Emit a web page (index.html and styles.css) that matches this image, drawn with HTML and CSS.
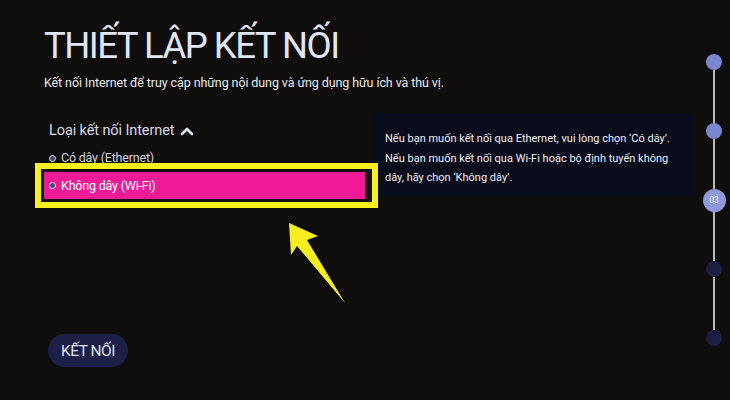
FILE: index.html
```html
<!DOCTYPE html>
<html lang="vi">
<head>
  <meta charset="UTF-8" />
  <meta name="viewport" content="width=device-width, initial-scale=1" />
  <title>Thiết lập kết nối</title>
  <link rel="stylesheet" href="styles.css">
</head>
<body>
  <div class="screen">
    <main class="setup">
      <h1 class="title">THIẾT LẬP KẾT NỐI</h1>
      <p class="lead">Kết nối Internet để truy cập những nội dung và ứng dụng hữu ích và thú vị.</p>

      <div class="row">
        <section class="picker">
          <div class="picker-head">
            Loại kết nối Internet
            <svg class="chevron" width="14" height="10" viewBox="0 0 14 10">
              <path d="M2 8 L7 3 L12 8" fill="none" stroke="#e4e6f2" stroke-width="2.6" stroke-linecap="round" stroke-linejoin="round"/>
            </svg>
          </div>
          <ul class="options">
            <li class="option"><span class="dot"></span>Có dây (Ethernet)</li>
            <li class="option focused"><span class="option-bar"><span class="dot"></span>Không dây (Wi-Fi)</span></li>
          </ul>
        </section>

        <aside class="hint">
          <p>Nếu bạn muốn kết nối qua Ethernet, vui lòng chọn ‘Có dây’.</p>
          <p>Nếu bạn muốn kết nối qua Wi-Fi hoặc bộ định tuyến không dây, hãy chọn ‘Không dây’.</p>
        </aside>
      </div>

      <button class="connect" type="button">KẾT NỐI</button>
    </main>

    <nav class="steps">
      <span class="step done"></span>
      <span class="step done"></span>
      <span class="step current">03</span>
      <span class="step"></span>
      <span class="step"></span>
    </nav>

    <!-- yellow pointer arrow -->
    <svg class="pointer" width="730" height="400" viewBox="0 0 730 400">
      <polygon points="289,223 318,236 307,240 345,303 297,246 291,255" fill="#f6ef1d"/>
    </svg>
  </div>
</body>
</html>
```

FILE: styles.css
```css
body {
  margin: 0;
  background: #0f0e0d;
  font-family: Roboto, "Noto Sans", sans-serif;
  color: #dfe3f7;
}
.screen {
  position: relative;
  display: flex;
  width: 730px;
  height: 400px;
  overflow: hidden;
}
.setup {
  flex: 1;
  padding: 22px 0 0 44px;
}
.title {
  margin: 0;
  font-size: 36.5px;
  font-weight: 400;
  line-height: 48px;
  letter-spacing: -1.5px;
  color: #e2e6fb;
}
.lead {
  margin: 3px 0 0;
  font-size: 12.5px;
  line-height: 20px;
  letter-spacing: -0.1px;
  color: #e8e8f0;
}
.row {
  display: flex;
  align-items: flex-start;
  margin-top: 20px;
}
.picker {
  width: 343px;
  margin-left: -9px;
}
.picker-head {
  display: flex;
  align-items: center;
  gap: 6px;
  margin-top: 5px;
  margin-bottom: 5px;
  padding-left: 14px;
  font-size: 14.5px;
  line-height: 26px;
  letter-spacing: -0.1px;
  color: #d6d8e4;
}
.options {
  list-style: none;
  margin: 0;
  padding: 0;
}
.option {
  display: flex;
  align-items: center;
  padding-left: 14px;
  font-size: 12.5px;
  line-height: 18px;
  letter-spacing: -0.2px;
  color: #cfd0dc;
}
.dot {
  width: 5px;
  height: 5px;
  margin-right: 5px;
  border: 1.5px solid #d8d9e6;
  border-radius: 50%;
  background: #4a4b68;
}
.focused {
  position: relative;
  z-index: 1;
  margin-top: -4px;
  padding: 3px 7px 3px 3px;
  border: 6px solid #f7f01c;
  background: #141214;
}
.option-bar {
  flex: 1;
  display: flex;
  align-items: center;
  height: 27px;
  padding-left: 5px;
  background: #ef1a96;
  color: #ffffff;
}
.hint {
  width: 296px;
  margin-left: -5px;
  padding: 16px 12px 9px;
  border-radius: 5px;
  background: #0b0c1b;
  font-size: 11px;
  line-height: 19.5px;
  color: #eceef8;
}
.hint p {
  margin: 0;
}
.connect {
  display: block;
  margin: 126px 0 0 4px;
  padding: 0 13px;
  height: 33px;
  border: none;
  border-radius: 17px;
  background: #1c1f46;
  font-family: inherit;
  font-size: 15.5px;
  letter-spacing: -0.5px;
  color: #dfe3f7;
}
.steps {
  position: relative;
  display: flex;
  flex-direction: column;
  align-items: center;
  width: 30px;
  padding-top: 28px;
  margin-right: 1px;
}
.steps::before {
  content: "";
  position: absolute;
  left: 14px;
  top: 62px;
  height: 275px;
  width: 2px;
  background: #b9b9c6;
}
.step {
  position: relative;
  display: flex;
  align-items: center;
  justify-content: center;
  width: 16px;
  height: 16px;
  margin: 26.4px 0;
  border-radius: 50%;
  background: #1b1d42;
}
.step.done {
  background: #7a86d2;
}
.step.current {
  width: 23px;
  height: 23px;
  margin: 23px 0;
  background: #8e98da;
  font-size: 8.5px;
  color: #eef0ff;
}
.pointer {
  position: absolute;
  left: 0;
  top: 0;
  pointer-events: none;
}
```
